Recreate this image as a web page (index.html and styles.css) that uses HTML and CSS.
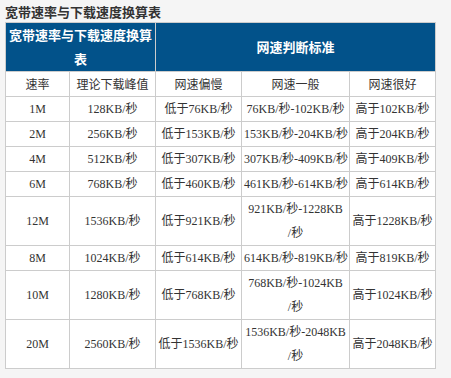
FILE: index.html
```html
<!DOCTYPE html>
<html lang="zh-CN">
<head>
    <meta charset="UTF-8">
    <title>宽带速率与下载速度换算表</title>
    <link rel="stylesheet" href="styles.css">
</head>
<body>
    <h3 class="title">宽带速率与下载速度换算表</h3>
    <table class="speed-table">
        <colgroup>
            <col class="col-rate">
            <col class="col-peak">
            <col class="col-slow">
            <col class="col-normal">
            <col class="col-good">
        </colgroup>
        <thead>
            <tr class="head-main">
                <th colspan="2">宽带速率与下载速度换算<br>表</th>
                <th colspan="3">网速判断标准</th>
            </tr>
            <tr class="head-sub">
                <th>速率</th>
                <th>理论下载峰值</th>
                <th>网速偏慢</th>
                <th>网速一般</th>
                <th>网速很好</th>
            </tr>
        </thead>
        <tbody>
            <tr>
                <td>1M</td>
                <td>128KB/秒</td>
                <td>低于76KB/秒</td>
                <td>76KB/秒-102KB/秒</td>
                <td>高于102KB/秒</td>
            </tr>
            <tr>
                <td>2M</td>
                <td>256KB/秒</td>
                <td>低于153KB/秒</td>
                <td>153KB/秒-204KB/秒</td>
                <td>高于204KB/秒</td>
            </tr>
            <tr>
                <td>4M</td>
                <td>512KB/秒</td>
                <td>低于307KB/秒</td>
                <td>307KB/秒-409KB/秒</td>
                <td>高于409KB/秒</td>
            </tr>
            <tr>
                <td>6M</td>
                <td>768KB/秒</td>
                <td>低于460KB/秒</td>
                <td>461KB/秒-614KB/秒</td>
                <td>高于614KB/秒</td>
            </tr>
            <tr>
                <td>12M</td>
                <td>1536KB/秒</td>
                <td>低于921KB/秒</td>
                <td>921KB/秒-1228KB<br>/秒</td>
                <td>高于1228KB/秒</td>
            </tr>
            <tr>
                <td>8M</td>
                <td>1024KB/秒</td>
                <td>低于614KB/秒</td>
                <td>614KB/秒-819KB/秒</td>
                <td>高于819KB/秒</td>
            </tr>
            <tr>
                <td>10M</td>
                <td>1280KB/秒</td>
                <td>低于768KB/秒</td>
                <td>768KB/秒-1024KB<br>/秒</td>
                <td>高于1024KB/秒</td>
            </tr>
            <tr>
                <td>20M</td>
                <td>2560KB/秒</td>
                <td>低于1536KB/秒</td>
                <td>1536KB/秒-2048KB<br>/秒</td>
                <td>高于2048KB/秒</td>
            </tr>
        </tbody>
    </table>
</body>
</html>
```

FILE: styles.css
```css
body {
    margin: 0;
    padding: 2px 5px 0;
    background-color: #f5f5f5;
    color: #333;
    font-family: "Noto Sans CJK SC", sans-serif;
}
.title {
    margin: 0;
    font-size: 13px;
    line-height: 20px;
    font-weight: 700;
    color: #333;
}
.speed-table {
    border-collapse: collapse;
    table-layout: fixed;
    width: 430px;
    background-color: #fff;
    border: 1px solid #ccc;
}
.col-rate { width: 64px; }
.col-peak { width: 86px; }
.col-slow { width: 86px; }
.col-normal { width: 108px; }
.col-good { width: 86px; }
.speed-table th,
.speed-table td {
    border: 1px solid #ccc;
    padding: 0 2px;
    text-align: center;
    vertical-align: middle;
    line-height: 24px;
    white-space: nowrap;
}
.head-main th {
    background-color: #02528a;
    color: #fff;
    font-size: 13px;
    font-weight: 700;
    white-space: normal;
}
.head-sub th {
    font-size: 12px;
    font-weight: 400;
    color: #333;
}
.speed-table td {
    font-family: "Liberation Serif", "Noto Sans CJK SC", serif;
    font-size: 12px;
    color: #333;
}
```
